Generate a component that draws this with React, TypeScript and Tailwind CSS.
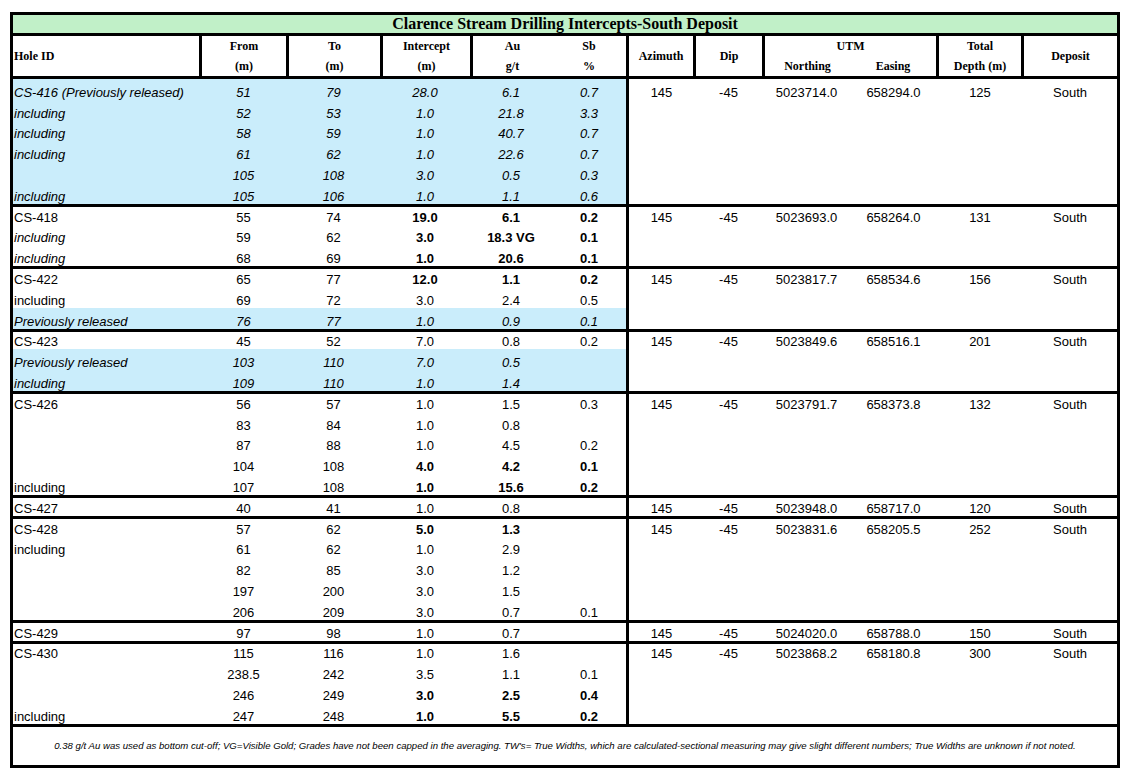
type Row = { c: string[]; blue?: boolean; it?: boolean; hi?: boolean; b?: boolean }
type Group = { right: string[]; rows: Row[] }

const groups: Group[] = [
  {
    right: ['145', '-45', '5023714.0', '658294.0', '125', 'South'],
    rows: [
      { c: ['CS-416 (Previously released)', '51', '79', '28.0', '6.1', '0.7'], blue: true, it: true },
      { c: ['including', '52', '53', '1.0', '21.8', '3.3'], blue: true, it: true },
      { c: ['including', '58', '59', '1.0', '40.7', '0.7'], blue: true, it: true },
      { c: ['including', '61', '62', '1.0', '22.6', '0.7'], blue: true, it: true },
      { c: ['', '105', '108', '3.0', '0.5', '0.3'], blue: true, it: true },
      { c: ['including', '105', '106', '1.0', '1.1', '0.6'], blue: true, it: true },
    ],
  },
  {
    right: ['145', '-45', '5023693.0', '658264.0', '131', 'South'],
    rows: [
      { c: ['CS-418', '55', '74', '19.0', '6.1', '0.2'], b: true },
      { c: ['including', '59', '62', '3.0', '18.3 VG', '0.1'], hi: true, b: true },
      { c: ['including', '68', '69', '1.0', '20.6', '0.1'], hi: true, b: true },
    ],
  },
  {
    right: ['145', '-45', '5023817.7', '658534.6', '156', 'South'],
    rows: [
      { c: ['CS-422', '65', '77', '12.0', '1.1', '0.2'], b: true },
      { c: ['including', '69', '72', '3.0', '2.4', '0.5'] },
      { c: ['Previously released', '76', '77', '1.0', '0.9', '0.1'], blue: true, it: true },
    ],
  },
  {
    right: ['145', '-45', '5023849.6', '658516.1', '201', 'South'],
    rows: [
      { c: ['CS-423', '45', '52', '7.0', '0.8', '0.2'] },
      { c: ['Previously released', '103', '110', '7.0', '0.5', ''], blue: true, it: true },
      { c: ['including', '109', '110', '1.0', '1.4', ''], blue: true, it: true },
    ],
  },
  {
    right: ['145', '-45', '5023791.7', '658373.8', '132', 'South'],
    rows: [
      { c: ['CS-426', '56', '57', '1.0', '1.5', '0.3'] },
      { c: ['', '83', '84', '1.0', '0.8', ''] },
      { c: ['', '87', '88', '1.0', '4.5', '0.2'] },
      { c: ['', '104', '108', '4.0', '4.2', '0.1'], b: true },
      { c: ['including', '107', '108', '1.0', '15.6', '0.2'], b: true },
    ],
  },
  {
    right: ['145', '-45', '5023948.0', '658717.0', '120', 'South'],
    rows: [{ c: ['CS-427', '40', '41', '1.0', '0.8', ''] }],
  },
  {
    right: ['145', '-45', '5023831.6', '658205.5', '252', 'South'],
    rows: [
      { c: ['CS-428', '57', '62', '5.0', '1.3', ''], b: true },
      { c: ['including', '61', '62', '1.0', '2.9', ''] },
      { c: ['', '82', '85', '3.0', '1.2', ''] },
      { c: ['', '197', '200', '3.0', '1.5', ''] },
      { c: ['', '206', '209', '3.0', '0.7', '0.1'] },
    ],
  },
  {
    right: ['145', '-45', '5024020.0', '658788.0', '150', 'South'],
    rows: [{ c: ['CS-429', '97', '98', '1.0', '0.7', ''] }],
  },
  {
    right: ['145', '-45', '5023868.2', '658180.8', '300', 'South'],
    rows: [
      { c: ['CS-430', '115', '116', '1.0', '1.6', ''] },
      { c: ['', '238.5', '242', '3.5', '1.1', '0.1'] },
      { c: ['', '246', '249', '3.0', '2.5', '0.4'], b: true },
      { c: ['including', '247', '248', '1.0', '5.5', '0.2'], b: true },
    ],
  },
]

function DataRow({ row, short }: { row: Row; short: boolean }) {
  return (
    <div
      className={`grid grid-cols-[187px_87px_93px_90px_82px_74px] items-end leading-[15px] ${
        short ? 'h-[17.8px]' : 'h-[20.8px]'
      } ${row.blue ? 'bg-[#caedfb]' : ''} ${row.it ? 'italic' : ''}`}
    >
      {row.c.map((v, i) => (
        <span
          key={i}
          className={`whitespace-nowrap ${i === 0 ? 'pl-[1px] text-left' : 'text-center'} ${
            i === 0 && row.hi ? 'italic' : ''
          } ${i >= 3 && row.b ? 'font-bold' : ''}`}
        >
          {v}
        </span>
      ))}
    </div>
  )
}

function Header() {
  return (
    <div className="flex h-[43px] border-b-[3px] border-black font-['Liberation_Serif',serif] text-[12px] font-bold leading-[20px]">
      <div className="flex w-[186px] items-center pl-[1px]">Hole ID</div>
      <div className="w-[87px] border-l-[3px] border-black text-center">
        <div>From</div>
        <div>(m)</div>
      </div>
      <div className="w-[94px] border-l-[3px] border-black text-center">
        <div>To</div>
        <div>(m)</div>
      </div>
      <div className="w-[90px] border-l-[3px] border-black text-center">
        <div>Intercept</div>
        <div>(m)</div>
      </div>
      <div className="flex w-[156px] border-l-[3px] border-black text-center">
        <div className="w-[79px]">
          <div>Au</div>
          <div>g/t</div>
        </div>
        <div className="w-[74px]">
          <div>Sb</div>
          <div>%</div>
        </div>
      </div>
      <div className="flex w-[67px] items-center justify-center border-l-[3px] border-black">Azimuth</div>
      <div className="flex w-[69px] items-center justify-center border-l-[3px] border-black">Dip</div>
      <div className="w-[174px] border-l-[3px] border-black text-center">
        <div>UTM</div>
        <div className="flex">
          <div className="w-[85px]">Northing</div>
          <div className="w-[86px]">Easing</div>
        </div>
      </div>
      <div className="w-[85px] border-l-[3px] border-black text-center">
        <div>Total</div>
        <div>Depth (m)</div>
      </div>
      <div className="flex w-[96px] items-center justify-center border-l-[3px] border-black">Deposit</div>
    </div>
  )
}

export default function App() {
  return (
    <div className="min-h-screen bg-white pl-[10px] pt-[12px] text-black">
      <div className="w-[1110px] border-[3px] border-black">
        <div className="h-[21px] border-b-[3px] border-black bg-[#c1f0c8] text-center font-['Liberation_Serif',serif] text-[16px] font-bold leading-[18px]">
          Clarence Stream Drilling Intercepts-South Deposit
        </div>
        <Header />
        <div className="font-['Liberation_Sans',sans-serif] text-[13px]">
          {groups.map((g, gi) => (
            <div key={gi} className={`flex items-start ${gi > 0 ? 'border-t-[3px] border-black' : ''}`}>
              <div className="w-[616px] border-r-[3px] border-black">
                {g.rows.map((r, ri) => (
                  <DataRow key={ri} row={r} short={gi > 0 && ri === 0} />
                ))}
              </div>
              <div
                className={`grid grid-cols-[65px_69px_87px_87px_86px_94px] items-end text-center leading-[15px] ${
                  gi > 0 ? 'h-[17.8px]' : 'h-[20.8px]'
                }`}
              >
                {g.right.map((v, i) => (
                  <span key={i}>{v}</span>
                ))}
              </div>
            </div>
          ))}
        </div>
        <div className="flex h-[41px] items-center justify-center border-t-[3px] border-black font-['Liberation_Sans',sans-serif] text-[9.6px] italic">
          0.38 g/t Au was used as bottom cut-off; VG=Visible Gold; Grades have not been capped in the averaging. TW's= True Widths, which are calculated-sectional measuring may give slight different numbers; True Widths are unknown if not noted.
        </div>
      </div>
    </div>
  )
}
